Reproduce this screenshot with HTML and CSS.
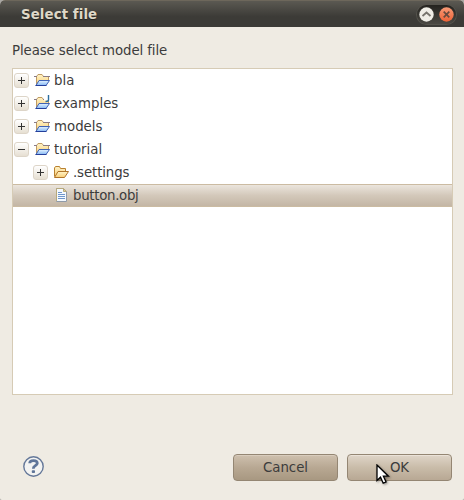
FILE: index.html
```html
<!DOCTYPE html>
<html lang="en">
<head>
<meta charset="utf-8">
<title>Select file</title>
<link rel="stylesheet" href="styles.css">
</head>
<body>
<svg class="defs" width="0" height="0" aria-hidden="true">
  <defs>
    <linearGradient id="yellow" x2="0" y2="1"><stop stop-color="#fff3c8"/><stop offset="1" stop-color="#f8cf78"/></linearGradient>
    <linearGradient id="blue" x2="0" y2="1"><stop stop-color="#e4f3ff"/><stop offset="1" stop-color="#86b8f4"/></linearGradient>
    <symbol id="project" viewBox="0 0 16 16">
      <path d="M2.500 13V4.500L4 2.500h4l1.500 2h5V8" fill="url(#yellow)" stroke="#c09b62"/>
      <path d="M0 4.500h3M9 4.500h7" stroke="#8a7c86" fill="none"/>
      <path d="M5 8.500h10.500l-3.500 5H2z" fill="url(#blue)" stroke="#3f62b5"/>
      <path d="M1.500 13.500h11" stroke="#243f9b"/>
    </symbol>
    <symbol id="folder" viewBox="0 0 16 16">
      <path d="M1.500 12.500V4l1-1.500h4l1 2h5V7" fill="url(#yellow)" stroke="#b9812f"/>
      <path d="M1.500 13.500L5 7.500h10.500l-4 6z" fill="url(#yellow)" stroke="#b0742a"/>
    </symbol>
    <symbol id="file" viewBox="0 0 12 14">
      <path d="M.5.5h7l3 3v10H.5z" fill="#f4f9ff" stroke="#8f9aa8"/>
      <path d="M.5 13V.5h7" fill="none" stroke="#b7a97c"/>
      <path d="M7.500.5v3h3z" fill="#e5cf92" stroke="#b7a97c"/>
      <path d="M2 4.500h4M2 6.500h7M2 8.500h7M2 10.500h7" stroke="#6f96cb"/>
    </symbol>
  </defs>
</svg>
<div class="window">
  <header class="titlebar">
    <h1 class="title">Select file</h1>
    <div class="controls">
      <svg class="control" viewBox="0 0 15 15"><circle cx="7.500" cy="7.500" r="7.200" fill="#efede6"/><path d="M3.500 9l4-3.500 4 3.500" fill="none" stroke="#77746d" stroke-width="1.800"/></svg>
      <svg class="control" viewBox="0 0 15 15"><defs><linearGradient id="close" x2="0" y2="1"><stop stop-color="#f89a76"/><stop offset="1" stop-color="#ec6236"/></linearGradient></defs><circle cx="7.500" cy="7.500" r="7.200" fill="url(#close)"/><path d="M4.700 4.700l5.600 5.600M10.300 4.700l-5.600 5.600" stroke="#684a3d" stroke-width="1.700"/></svg>
    </div>
  </header>
  <main class="content">
    <p class="prompt">Please select model file</p>
    <div class="tree">
      <div class="row"><span class="expander plus"></span><svg class="icon"><use href="#project"/></svg><span>bla</span></div>
      <div class="row"><span class="expander plus"></span><svg class="icon"><rect x="10" y="0" width="6" height="7" fill="#fff"/><use href="#project"/><path d="M10 4.500h6" stroke="#fff" stroke-width="2"/><path d="M14.500 0v5q0 1.500-3 1.500" fill="none" stroke="#2b6d9f" stroke-width="1.400"/></svg><span>examples</span></div>
      <div class="row"><span class="expander plus"></span><svg class="icon"><use href="#project"/></svg><span>models</span></div>
      <div class="row"><span class="expander"></span><svg class="icon"><use href="#project"/></svg><span>tutorial</span></div>
      <div class="row child"><span class="expander plus"></span><svg class="icon"><use href="#folder"/></svg><span>.settings</span></div>
      <div class="row leaf selected"><svg class="file-icon"><use href="#file"/></svg><span>button.obj</span></div>
    </div>
    <footer class="footer">
      <svg class="help" viewBox="0 0 21 21"><circle cx="10.500" cy="10.500" r="9.700" fill="#f3f3f2" stroke="#657899" stroke-width="1.400"/><path d="M6.700 7.300Q6.800 4.600 10.500 4.600T14.300 7.300Q14.300 8.700 12 9.900 10.300 10.900 10.300 12.700" fill="none" stroke="#5f7599" stroke-width="2.800"/><rect x="8.800" y="14.200" width="3.200" height="2.800" rx=".8" fill="#5f7599"/></svg>
      <button class="button">Cancel</button>
      <button class="button hover">OK<svg class="cursor" viewBox="0 0 14 22"><path d="M1 1v15.500l3.500-3.300 2.700 6 2.900-1.200-2.700-5.800h5z" fill="#fff" stroke="#000" stroke-width="1.300"/></svg></button>
    </footer>
  </main>
</div>
</body>
</html>
```
FILE: styles.css
```css
* { box-sizing: border-box; }

body {
  margin: 0;
  background: #a9a7a3;
  color: #3c3c3c;
  font: 13.333px/23px "DejaVu Sans", sans-serif;
}

.defs { position: absolute; }

.window {
  display: flex;
  flex-direction: column;
  height: 500px;
  overflow: hidden;
  border-radius: 5px 5px 2px 2px;
  background: #efebe3;
}

.titlebar {
  display: flex;
  align-items: center;
  justify-content: space-between;
  height: 27px;
  padding: 0 8px 0 21px;
  border-top: 1px solid #6d675b;
  background: linear-gradient(#5b5952, #3c3b37 60%, #3c3b37);
}

.title {
  margin: 0;
  padding-top: 1px;
  color: #dfd8c8;
  font-size: 13.333px;
  letter-spacing: 0.1px;
  line-height: 24px;
  text-shadow: 0 1px 1px #24231f;
}

.controls {
  display: flex;
  align-items: center;
  gap: 5px;
  height: 19px;
  padding: 0 2px;
  border-radius: 10px;
  background: linear-gradient(#24231f, #4b4943);
  box-shadow: 0 0 0 1px #55534c;
}

.control { width: 15px; height: 15px; }

.content {
  display: flex;
  flex: 1;
  flex-direction: column;
  padding: 12px 12px 19px;
}

.prompt {
  margin: 0 0 6px;
  letter-spacing: -0.09px;
}

.tree {
  width: 441px;
  height: 327px;
  border: 1px solid #d6cbb5;
  background: #fff;
}

.row {
  display: flex;
  align-items: center;
  height: 23px;
  padding-left: 1px;
}

.row.child {
  padding-left: 20px;
  letter-spacing: -0.12px;
}

.row.leaf {
  padding-left: 43px;
  letter-spacing: -0.3px;
}

.selected {
  border: solid #cbbba2;
  border-width: 1px 0;
  background: linear-gradient(#ebe5dd, #d3c8ba 50%, #c3b6a5);
}

.expander {
  width: 15px;
  height: 15px;
  margin-right: 5px;
  border: 1px solid #ddd5c8;
  border-radius: 3px;
  background:
    linear-gradient(#333, #333) center / 7px 1px no-repeat,
    linear-gradient(#fff, #e6dfd2);
}

.expander.plus {
  background:
    linear-gradient(#333, #333) center / 7px 1px no-repeat,
    linear-gradient(#333, #333) center / 1px 7px no-repeat,
    linear-gradient(#fff, #e6dfd2);
}

.icon {
  width: 16px;
  height: 16px;
  margin: 0 4px 1px 0;
  overflow: visible;
}

.file-icon {
  width: 12px;
  height: 14px;
  margin: 0 5px 1px 0;
}

.footer {
  display: flex;
  align-items: center;
  gap: 9px;
  margin-top: auto;
}

.help {
  width: 21px;
  height: 21px;
  margin: 0 auto 3px 11px;
}

.button {
  position: relative;
  width: 105px;
  height: 27px;
  padding: 0 0 1px;
  border: 1px solid #948673;
  border-radius: 4px;
  background: linear-gradient(#cec0ae, #b8a893 50%, #a89881);
  box-shadow: inset 0 1px #d8ccbd;
  color: #3c3c3c;
  font: inherit;
}

.button.hover {
  background: linear-gradient(#dfd5c8, #c9bca9 50%, #b8a894);
  box-shadow: inset 0 1px #eae2d8;
}

.cursor {
  position: absolute;
  top: 9px;
  left: 28px;
  width: 14px;
  height: 22px;
  filter: drop-shadow(1px 1px 1px #0006);
}
```
